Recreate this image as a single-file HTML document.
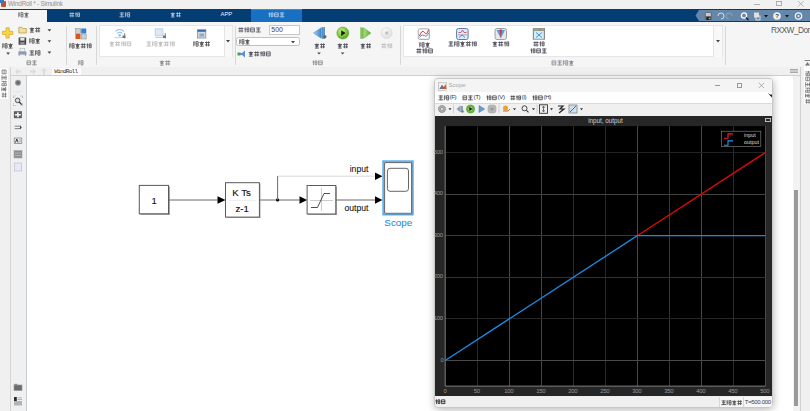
<!DOCTYPE html><html><head><meta charset="utf-8"><style>
*{margin:0;padding:0;box-sizing:border-box}
html,body{width:810px;height:411px;overflow:hidden;background:#fff;font-family:"Liberation Sans",sans-serif}
.ab{position:absolute}
.cg{position:absolute;display:block}
.t{position:absolute;white-space:nowrap;line-height:1}
</style></head><body><div class="ab" style="left:0;top:0;width:810px;height:9px;background:#f1f1f1"></div><div class="ab" style="left:1px;top:1px;width:5px;height:6px;background:#c0502a;border-radius:1px"></div><div class="ab" style="left:0px;top:0px;width:4px;height:3px;background:#3a78c0"></div><div class="t" style="left:8.1px;top:0.6px;font-size:6.3px;color:#909090;letter-spacing:-.2px">WindRoll * - Simulink</div><div class="ab" style="left:754px;top:3.5px;width:6px;height:1px;background:#b0b0b0"></div><div class="ab" style="left:776px;top:1px;width:6px;height:5px;border:1px solid #b0b0b0"></div><svg class="ab" style="left:797px;top:0px" width="8" height="8"><path d="M1 1L6.5 6.5M6.5 1L1 6.5" stroke="#a8a8a8" stroke-width=".8"/></svg><div class="ab" style="left:0;top:8.7px;width:810px;height:12.9px;background:#043d74"></div><div class="ab" style="left:0;top:10.4px;width:47.2px;height:12px;background:#f5f5f5"></div><div class="ab" style="left:250.8px;top:8.7px;width:51.2px;height:12.9px;background:#1870c2;border-top:.8px solid #3a8ad8"></div><svg class="ab" style="left:17.80px;top:12.39px;opacity:0.8" width="12.2" height="6.6"><path d="M0.79 0.40V5.22M0.79 1.12H2.33M0.79 3.05H2.33M3.05 0.64H4.98V4.98H3.05ZM3.05 2.81H4.98M8.41 0.40V1.36M6.24 1.46H10.58M6.96 2.42H9.85M6.96 3.39H9.85M8.41 1.46V5.22M6.48 4.98H10.33" stroke="#333" stroke-width="0.75" fill="none"/></svg><svg class="ab" style="left:68.50px;top:12.39px;opacity:0.8" width="12.2" height="6.6"><path d="M0.40 1.46H5.22M1.84 0.40V5.22M3.87 0.40V5.22M0.40 3.87H5.22M7.06 0.40V5.22M6.00 1.94H8.02M8.50 0.88H10.72M8.70 0.98V4.64H10.53V0.98M8.70 2.81H10.53" stroke="#fff" stroke-width="0.7" fill="none"/></svg><svg class="ab" style="left:118.80px;top:12.39px;opacity:0.8" width="12.2" height="6.6"><path d="M0.64 0.98H4.98M2.81 0.40V5.22M1.12 2.81H4.49M0.40 4.83H5.22M6.39 0.40V5.22M6.39 1.12H7.93M6.39 3.05H7.93M8.65 0.64H10.58V4.98H8.65ZM8.65 2.81H10.58" stroke="#fff" stroke-width="0.7" fill="none"/></svg><svg class="ab" style="left:169.80px;top:12.39px;opacity:0.8" width="12.2" height="6.6"><path d="M2.81 0.40V1.36M0.64 1.46H4.98M1.36 2.42H4.25M1.36 3.39H4.25M2.81 1.46V5.22M0.88 4.98H4.73M6.00 1.46H10.82M7.44 0.40V5.22M9.47 0.40V5.22M6.00 3.87H10.82" stroke="#fff" stroke-width="0.7" fill="none"/></svg><div class="t" style="left:220.5px;top:12.4px;font-size:5.9px;color:#e8eef5">APP</div><svg class="ab" style="left:268.20px;top:12.39px;opacity:0.8" width="17.8" height="6.6"><path d="M1.46 0.40V5.22M0.40 1.94H2.42M2.90 0.88H5.12M3.10 0.98V4.64H4.93V0.98M3.10 2.81H4.93M6.58 0.88H10.24V4.73H6.58ZM6.58 2.81H10.24M11.84 0.98H16.18M14.01 0.40V5.22M12.32 2.81H15.69M11.60 4.83H16.42" stroke="#fff" stroke-width="0.7" fill="none"/></svg><svg class="ab" style="left:695px;top:10px" width="115" height="11"><path d="M4 0 H115 V11 H4 L0.5 5.5 Z" fill="#6587aa"/></svg><svg class="ab" style="left:704px;top:11.5px" width="9" height="9"><rect x=".8" y=".5" width="7" height="7.5" fill="#6a6a6a"/><rect x="1.8" y="1" width="5" height="3" fill="#c8c8c8"/><rect x="2.5" y="5.2" width="3.8" height="2.8" fill="#1a1a1a"/><rect x="4.8" y="5.8" width="1" height="1.5" fill="#ddd"/></svg><svg class="ab" style="left:716px;top:11px" width="70" height="10"><path d="M2 5 a3 3 0 1 1 3 3" stroke="#cfe0f0" stroke-width="1" fill="none"/><path d="M16 5 a3 3 0 1 0 -3 3" stroke="#8aa4be" stroke-width="1" fill="none"/><circle cx="28" cy="4.5" r="2.6" stroke="#fff" stroke-width="1.3" fill="none"/><path d="M30 6.5 L32.5 9" stroke="#222" stroke-width="1.5"/><rect x="38" y="1.5" width="5" height="5" fill="#ddd"/><rect x="40" y="5" width="4" height="4" fill="none" stroke="#eee" stroke-width=".8"/><path d="M48 4 h4 l-2 2.5z" fill="#111"/></svg><svg class="ab" style="left:772px;top:11px" width="38" height="10"><circle cx="5" cy="5" r="3.8" fill="#f0f0f0"/><text x="3.2" y="7.3" font-size="6" font-family="Liberation Sans" font-weight="bold" fill="#333">?</text><path d="M13 4 h4 l-2 2.5z" fill="#111"/><circle cx="26.5" cy="5" r="3.2" fill="none" stroke="#f4f4f4" stroke-width="1.2"/><circle cx="26.5" cy="5" r="1" fill="#f4f4f4"/></svg><div class="ab" style="left:0;top:21.8px;width:810px;height:45.2px;background:#f5f5f5"></div><div class="ab" style="left:0;top:66.6px;width:810px;height:1px;background:#dcdcdc"></div><div class="ab" style="left:65.5px;top:26px;width:1px;height:39px;background:#d7d7d7"></div><div class="ab" style="left:96.3px;top:26px;width:1px;height:39px;background:#d7d7d7"></div><div class="ab" style="left:235.0px;top:26px;width:1px;height:39px;background:#d7d7d7"></div><div class="ab" style="left:400.4px;top:26px;width:1px;height:39px;background:#d7d7d7"></div><div class="ab" style="left:724.5px;top:26px;width:1px;height:39px;background:#d7d7d7"></div><div class="ab" style="left:98.6px;top:25px;width:134px;height:32px;background:#fff;border:1px solid #e6e6e6"></div><div class="ab" style="left:223.8px;top:25.6px;width:8.4px;height:31px;background:#f8f8f8;border-left:.6px solid #e4e4e4"></div><div class="ab" style="left:402.5px;top:25px;width:320px;height:32px;background:#fff;border:1px solid #e6e6e6"></div><div class="ab" style="left:713.3px;top:25.6px;width:8.4px;height:31px;background:#f8f8f8;border-left:.6px solid #e4e4e4"></div><svg class="ab" style="left:226.2px;top:40px" width="5" height="3"><path d="M0 0h4l-2 2.5z" fill="#444"/></svg><svg class="ab" style="left:716.0px;top:40px" width="5" height="3"><path d="M0 0h4l-2 2.5z" fill="#444"/></svg><svg class="ab" style="left:26.00px;top:59.69px;opacity:0.75" width="12.2" height="6.6"><path d="M0.98 0.88H4.64V4.73H0.98ZM0.98 2.81H4.64M6.24 0.98H10.58M8.41 0.40V5.22M6.72 2.81H10.09M6.00 4.83H10.82" stroke="#555" stroke-width="0.75" fill="none"/></svg><svg class="ab" style="left:77.80px;top:59.69px;opacity:0.75" width="6.6" height="6.6"><path d="M0.79 0.40V5.22M0.79 1.12H2.33M0.79 3.05H2.33M3.05 0.64H4.98V4.98H3.05ZM3.05 2.81H4.98" stroke="#555" stroke-width="0.75" fill="none"/></svg><svg class="ab" style="left:159.20px;top:59.81px;opacity:0.75" width="12.6" height="6.8"><path d="M2.89 0.40V1.40M0.65 1.50H5.14M1.40 2.49H4.39M1.40 3.49H4.39M2.89 1.50V5.39M0.90 5.14H4.89M6.20 1.50H11.19M7.70 0.40V5.39M9.79 0.40V5.39M6.20 3.99H11.19" stroke="#556" stroke-width="0.75" fill="none"/></svg><svg class="ab" style="left:312.00px;top:59.99px;opacity:0.75" width="12.2" height="6.6"><path d="M1.46 0.40V5.22M0.40 1.94H2.42M2.90 0.88H5.12M3.10 0.98V4.64H4.93V0.98M3.10 2.81H4.93M6.58 0.88H10.24V4.73H6.58ZM6.58 2.81H10.24" stroke="#556" stroke-width="0.75" fill="none"/></svg><svg class="ab" style="left:550.80px;top:59.61px;opacity:0.75" width="24.2" height="6.8"><path d="M1.00 0.90H4.79V4.89H1.00ZM1.00 2.89H4.79M6.45 1.00H10.94M8.69 0.40V5.39M6.95 2.89H10.44M6.20 4.99H11.19M12.40 0.40V5.39M12.40 1.15H14.00M12.40 3.14H14.00M14.74 0.65H16.74V5.14H14.74ZM14.74 2.89H16.74M20.29 0.40V1.40M18.05 1.50H22.54M18.80 2.49H21.79M18.80 3.49H21.79M20.29 1.50V5.39M18.30 5.14H22.29" stroke="#556" stroke-width="0.75" fill="none"/></svg><svg class="ab" style="left:0;top:22px" width="65" height="40"><path d="M6 5.8h3.2v3.5h3.6v3.2h-3.6v3.6h-3.2v-3.6h-3.6v-3.2h3.6z" fill="#f7d44a" stroke="#d9a520" stroke-width=".7"/><path d="M6.2 30.5h3.8l-1.9 2.2z" fill="#444"/><path d="M18.8 5.3h3l1 1.2h3.5v4.5h-7.5z" fill="#f3dfa0" stroke="#b89640" stroke-width=".7"/><rect x="18.6" y="15.5" width="7.6" height="7.3" rx=".6" fill="#4a4a4a"/><rect x="20.3" y="16" width="4.2" height="2.6" fill="#e8e8e8"/><rect x="20.3" y="20.2" width="4.2" height="2.3" fill="#9a9a9a"/><rect x="18.4" y="29.2" width="8" height="4.5" rx="1" fill="#8b9bb0"/><rect x="20" y="26.7" width="4.8" height="2.6" fill="#f4f4f4" stroke="#9aa" stroke-width=".5"/><rect x="19.8" y="32.5" width="5" height="2" fill="#eee"/><path d="M47.5 7.2h3.8l-1.9 2.2z" fill="#444"/><path d="M47.5 18.3h3.8l-1.9 2.2z" fill="#444"/><path d="M47.5 29.5h3.8l-1.9 2.2z" fill="#444"/></svg><svg class="ab" style="left:1.90px;top:43.15px;opacity:0.8" width="12.4" height="6.7"><path d="M0.79 0.40V5.30M0.79 1.14H2.36M0.79 3.10H2.36M3.10 0.65H5.06V5.06H3.10ZM3.10 2.85H5.06M8.55 0.40V1.38M6.35 1.48H10.76M7.08 2.46H10.02M7.08 3.44H10.02M8.55 1.48V5.30M6.59 5.06H10.51" stroke="#222" stroke-width="0.85" fill="none"/></svg><svg class="ab" style="left:29.00px;top:27.11px;opacity:0.8" width="12.6" height="6.8"><path d="M2.89 0.40V1.40M0.65 1.50H5.14M1.40 2.49H4.39M1.40 3.49H4.39M2.89 1.50V5.39M0.90 5.14H4.89M6.20 1.50H11.19M7.70 0.40V5.39M9.79 0.40V5.39M6.20 3.99H11.19" stroke="#222" stroke-width="0.85" fill="none"/></svg><svg class="ab" style="left:29.00px;top:38.41px;opacity:0.8" width="12.6" height="6.8"><path d="M0.80 0.40V5.39M0.80 1.15H2.40M0.80 3.14H2.40M3.14 0.65H5.14V5.14H3.14ZM3.14 2.89H5.14M8.69 0.40V1.40M6.45 1.50H10.94M7.20 2.49H10.19M7.20 3.49H10.19M8.69 1.50V5.39M6.70 5.14H10.69" stroke="#222" stroke-width="0.85" fill="none"/></svg><svg class="ab" style="left:29.00px;top:49.61px;opacity:0.8" width="12.6" height="6.8"><path d="M0.65 1.00H5.14M2.89 0.40V5.39M1.15 2.89H4.64M0.40 4.99H5.39M6.60 0.40V5.39M6.60 1.15H8.20M6.60 3.14H8.20M8.94 0.65H10.94V5.14H8.94ZM8.94 2.89H10.94" stroke="#222" stroke-width="0.85" fill="none"/></svg><svg class="ab" style="left:75px;top:27.5px" width="12" height="12"><rect x=".5" y=".5" width="5" height="5" fill="#c8d0d0" stroke="#8a9a9a" stroke-width=".6"/><rect x="6.2" y=".5" width="5" height="5" fill="#2a86d4"/><rect x=".5" y="6" width="5" height="5" fill="#d9531e"/><rect x="6.2" y="6" width="5" height="5" fill="#c8d0d0" stroke="#8a9a9a" stroke-width=".6"/></svg><svg class="ab" style="left:69.10px;top:43.15px;opacity:0.8" width="23.8" height="6.7"><path d="M0.79 0.40V5.30M0.79 1.14H2.36M0.79 3.10H2.36M3.10 0.65H5.06V5.06H3.10ZM3.10 2.85H5.06M8.55 0.40V1.38M6.35 1.48H10.76M7.08 2.46H10.02M7.08 3.44H10.02M8.55 1.48V5.30M6.59 5.06H10.51M11.80 1.48H16.70M13.27 0.40V5.30M15.33 0.40V5.30M11.80 3.93H16.70M18.58 0.40V5.30M17.50 1.97H19.56M20.05 0.89H22.30M20.25 0.99V4.71H22.11V0.99M20.25 2.85H22.11" stroke="#222" stroke-width="0.85" fill="none"/></svg><svg class="ab" style="left:100px;top:22px" width="125" height="20"><path d="M15.5 9.5 a5.5 5.5 0 0 1 8.5 0" stroke="#8cc0ea" stroke-width="1.1" fill="none"/><path d="M17.2 11.5 a3.2 3.2 0 0 1 5 0" stroke="#8cc0ea" stroke-width="1.1" fill="none"/><circle cx="19.7" cy="13.2" r="1.3" fill="#8cc0ea"/><rect x="14.5" y="15.2" width="10" height=".9" fill="#c8c8c8"/><rect x="24" y="11" width="1.2" height="5.5" fill="#999"/><rect x="22.5" y="13.5" width="3" height="2.5" fill="#777"/><rect x="55.2" y="6.8" width="7.7" height="7" fill="#dce8f4" stroke="#b8cadb" stroke-width=".8"/><rect x="55.2" y="15" width="10" height=".9" fill="#c8c8c8"/><rect x="64.7" y="11" width="1.2" height="5.5" fill="#999"/><rect x="63" y="13.5" width="3" height="2.5" fill="#777"/><rect x="97.5" y="7.8" width="8.3" height="8.2" fill="#d9d9d9" stroke="#8a8a8a" stroke-width=".8"/><rect x="97.5" y="7.8" width="8.3" height="2" fill="#3a6ab0"/><rect x="99.3" y="11.5" width="4.8" height="3" fill="#7ab0e0"/></svg><svg class="ab" style="left:109.20px;top:41.15px;opacity:0.65" width="23.8" height="6.7"><path d="M2.85 0.40V1.38M0.65 1.48H5.06M1.38 2.46H4.32M1.38 3.44H4.32M2.85 1.48V5.30M0.89 5.06H4.81M6.10 1.48H11.00M7.57 0.40V5.30M9.63 0.40V5.30M6.10 3.93H11.00M12.88 0.40V5.30M11.80 1.97H13.86M14.35 0.89H16.60M14.55 0.99V4.71H16.41V0.99M14.55 2.85H16.41M18.09 0.89H21.81V4.81H18.09ZM18.09 2.85H21.81" stroke="#999" stroke-width="0.85" fill="none"/></svg><svg class="ab" style="left:146.20px;top:41.11px;opacity:0.65" width="30.0" height="6.8"><path d="M0.65 1.00H5.14M2.89 0.40V5.39M1.15 2.89H4.64M0.40 4.99H5.39M6.60 0.40V5.39M6.60 1.15H8.20M6.60 3.14H8.20M8.94 0.65H10.94V5.14H8.94ZM8.94 2.89H10.94M14.49 0.40V1.40M12.25 1.50H16.74M13.00 2.49H15.99M13.00 3.49H15.99M14.49 1.50V5.39M12.50 5.14H16.49M17.80 1.50H22.79M19.30 0.40V5.39M21.39 0.40V5.39M17.80 3.99H22.79M24.70 0.40V5.39M23.60 2.00H25.69M26.19 0.90H28.49M26.39 1.00V4.79H28.29V1.00M26.39 2.89H28.29" stroke="#999" stroke-width="0.85" fill="none"/></svg><svg class="ab" style="left:192.50px;top:41.31px;opacity:0.8" width="18.4" height="6.8"><path d="M0.80 0.40V5.39M0.80 1.15H2.40M0.80 3.14H2.40M3.14 0.65H5.14V5.14H3.14ZM3.14 2.89H5.14M8.69 0.40V1.40M6.45 1.50H10.94M7.20 2.49H10.19M7.20 3.49H10.19M8.69 1.50V5.39M6.70 5.14H10.69M12.00 1.50H16.99M13.50 0.40V5.39M15.59 0.40V5.39M12.00 3.99H16.99" stroke="#222" stroke-width="0.85" fill="none"/></svg><svg class="ab" style="left:237.90px;top:26.81px;opacity:0.8" width="24.2" height="6.8"><path d="M0.40 1.50H5.39M1.90 0.40V5.39M3.99 0.40V5.39M0.40 3.99H5.39M7.30 0.40V5.39M6.20 2.00H8.29M8.79 0.90H11.09M8.99 1.00V4.79H10.89V1.00M8.99 2.89H10.89M12.60 0.90H16.39V4.89H12.60ZM12.60 2.89H16.39M18.05 1.00H22.54M20.29 0.40V5.39M18.55 2.89H22.04M17.80 4.99H22.79" stroke="#334" stroke-width="0.85" fill="none"/></svg><div class="ab" style="left:269px;top:24.9px;width:30.6px;height:10.4px;background:#fff;border:1px solid #c8c8c8"></div><div class="t" style="left:271.3px;top:26.2px;font-size:7px;color:#444">500</div><div class="ab" style="left:236.3px;top:36.6px;width:63.4px;height:9.8px;background:#fff;border:1px solid #c0c0c0;border-radius:2.5px"></div><svg class="ab" style="left:238.80px;top:38.69px;opacity:0.8" width="12.2" height="6.6"><path d="M0.79 0.40V5.22M0.79 1.12H2.33M0.79 3.05H2.33M3.05 0.64H4.98V4.98H3.05ZM3.05 2.81H4.98M8.41 0.40V1.36M6.24 1.46H10.58M6.96 2.42H9.85M6.96 3.39H9.85M8.41 1.46V5.22M6.48 4.98H10.33" stroke="#222" stroke-width="0.85" fill="none"/></svg><svg class="ab" style="left:291px;top:41px" width="5" height="3"><path d="M0 0h4l-2 2.5z" fill="#444"/></svg><svg class="ab" style="left:236px;top:49.5px" width="11" height="8"><rect x="1.5" y="2.5" width="3" height="3" fill="#3aa84a"/><path d="M4 3 h2 l3 -2.5 v7 l-3 -2.5 h-2z" fill="#5b8fd0"/></svg><svg class="ab" style="left:248.00px;top:50.61px;opacity:0.8" width="24.2" height="6.8"><path d="M2.89 0.40V1.40M0.65 1.50H5.14M1.40 2.49H4.39M1.40 3.49H4.39M2.89 1.50V5.39M0.90 5.14H4.89M6.20 1.50H11.19M7.70 0.40V5.39M9.79 0.40V5.39M6.20 3.99H11.19M13.10 0.40V5.39M12.00 2.00H14.09M14.59 0.90H16.89M14.79 1.00V4.79H16.69V1.00M14.79 2.89H16.69M18.40 0.90H22.19V4.89H18.40ZM18.40 2.89H22.19" stroke="#223" stroke-width="0.85" fill="none"/></svg><svg class="ab" style="left:305px;top:22px" width="95" height="36"><defs><radialGradient id="gr" cx=".4" cy=".35" r=".7"><stop offset="0" stop-color="#c6f08a"/><stop offset=".6" stop-color="#7cc83a"/><stop offset="1" stop-color="#4a9a1c"/></radialGradient><radialGradient id="gs" cx=".4" cy=".35" r=".7"><stop offset="0" stop-color="#fafafa"/><stop offset="1" stop-color="#dcdcdc"/></radialGradient><linearGradient id="gb" x1="0" x2="1"><stop offset="0" stop-color="#a8d0f0"/><stop offset="1" stop-color="#3a86c8"/></linearGradient><linearGradient id="gg" x1="0" x2="1"><stop offset="0" stop-color="#a8e080"/><stop offset="1" stop-color="#5aaa30"/></linearGradient></defs><path d="M8.5 11 L16.3 5.7 V16.3 Z" fill="url(#gb)" stroke="#3a80c0" stroke-width=".5"/><rect x="17" y="5.7" width="2.8" height="10.8" fill="#5a9ad0" stroke="#3a70a0" stroke-width=".4"/><circle cx="19.8" cy="14.8" r="1.7" fill="#666"/><circle cx="37.8" cy="11.1" r="6" fill="url(#gr)" stroke="#5a9a2a" stroke-width=".5"/><path d="M36.2 8.3v5.6l4.4-2.8z" fill="#1a1a1a"/><rect x="55.5" y="5.8" width="2.2" height="10.6" fill="url(#gg)" stroke="#5aa030" stroke-width=".4"/><path d="M58.5 5.8 V16.4 L65.8 11.1 Z" fill="url(#gg)" stroke="#5aa030" stroke-width=".5"/><circle cx="81.7" cy="11" r="5.6" fill="url(#gs)" stroke="#d8d8d8" stroke-width=".5"/><rect x="80.2" y="9.5" width="3" height="3" fill="#c0c0c0"/><path d="M12.2 30.6h3.6l-1.8 2z" fill="#444"/><path d="M35.8 30.6h3.6l-1.8 2z" fill="#444"/></svg><svg class="ab" style="left:313.50px;top:42.95px;opacity:0.85" width="12.4" height="6.7"><path d="M2.85 0.40V1.38M0.65 1.48H5.06M1.38 2.46H4.32M1.38 3.44H4.32M2.85 1.48V5.30M0.89 5.06H4.81M6.10 1.48H11.00M7.57 0.40V5.30M9.63 0.40V5.30M6.10 3.93H11.00" stroke="#334" stroke-width="0.9" fill="none"/></svg><svg class="ab" style="left:336.60px;top:42.95px;opacity:0.85" width="12.4" height="6.7"><path d="M2.85 0.40V1.38M0.65 1.48H5.06M1.38 2.46H4.32M1.38 3.44H4.32M2.85 1.48V5.30M0.89 5.06H4.81M6.10 1.48H11.00M7.57 0.40V5.30M9.63 0.40V5.30M6.10 3.93H11.00" stroke="#334" stroke-width="0.9" fill="none"/></svg><svg class="ab" style="left:359.80px;top:42.95px;opacity:0.85" width="12.4" height="6.7"><path d="M2.85 0.40V1.38M0.65 1.48H5.06M1.38 2.46H4.32M1.38 3.44H4.32M2.85 1.48V5.30M0.89 5.06H4.81M6.10 1.48H11.00M7.57 0.40V5.30M9.63 0.40V5.30M6.10 3.93H11.00" stroke="#334" stroke-width="0.9" fill="none"/></svg><svg class="ab" style="left:381.20px;top:42.95px;opacity:0.6" width="12.4" height="6.7"><path d="M0.40 1.48H5.30M1.87 0.40V5.30M3.93 0.40V5.30M0.40 3.93H5.30M7.18 0.40V5.30M6.10 1.97H8.16M8.65 0.89H10.90M8.85 0.99V4.71H10.71V0.99M8.85 2.85H10.71" stroke="#999" stroke-width="0.85" fill="none"/></svg><svg class="ab" style="left:410px;top:22px" width="140" height="20"><rect x="8.6" y="7.2" width="11" height="10.5" rx="1.5" fill="#7a7a7a" opacity=".5"/><rect x="8.3" y="6.8" width="11" height="10.5" rx="1.5" fill="#fafafa" stroke="#9a9a9a" stroke-width=".8"/><path d="M9.5 14 q2.5 -7 5 -3.5 t4 -3" stroke="#d03030" fill="none" stroke-width="1"/><path d="M9.5 15.5 q2.5 -4 5 -2 t4 -2.5" stroke="#3a70c0" fill="none" stroke-width=".8"/><rect x="46.6" y="6.5" width="11.5" height="11" rx="1.8" fill="#dfe8f4" stroke="#5a7ab0" stroke-width="1"/><path d="M48.5 10.5h2.5l1.5 -2.5 1.5 2.5h2.5" stroke="#d04040" fill="none" stroke-width=".8"/><path d="M48 12.8h9" stroke="#5a7ab0" stroke-width=".5"/><path d="M49 15.5l3 -2.5 3 2.5" stroke="#3a70c0" fill="none" stroke-width=".8"/><rect x="85" y="6.5" width="11.5" height="11" rx="2" fill="#e8e8e8" stroke="#8a8a8a" stroke-width=".8"/><path d="M86.5 8 l4.3 8.5 4.3 -8.5z" fill="#5a9ae0"/><path d="M89.6 7.5 l1.2 8 1.2 -8z" fill="#e03030"/><rect x="122.8" y="6.1" width="12.2" height="11.6" fill="#8a8a8a"/><rect x="123.8" y="7" width="10.2" height="1.5" fill="#7ac080"/><rect x="129" y="7" width="2" height="1.5" fill="#e06060"/><rect x="124" y="9" width="9.8" height="7.8" fill="#d8ecf8"/><path d="M126 10.5l6 5M132 10.5l-6 5" stroke="#3a9ae0" stroke-width="1"/></svg><svg class="ab" style="left:418.60px;top:41.55px;opacity:0.85" width="12.4" height="6.7"><path d="M0.79 0.40V5.30M0.79 1.14H2.36M0.79 3.10H2.36M3.10 0.65H5.06V5.06H3.10ZM3.10 2.85H5.06M8.55 0.40V1.38M6.35 1.48H10.76M7.08 2.46H10.02M7.08 3.44H10.02M8.55 1.48V5.30M6.59 5.06H10.51" stroke="#334" stroke-width="0.9" fill="none"/></svg><svg class="ab" style="left:415.60px;top:48.31px;opacity:0.85" width="18.4" height="6.8"><path d="M0.40 1.50H5.39M1.90 0.40V5.39M3.99 0.40V5.39M0.40 3.99H5.39M7.30 0.40V5.39M6.20 2.00H8.29M8.79 0.90H11.09M8.99 1.00V4.79H10.89V1.00M8.99 2.89H10.89M12.60 0.90H16.39V4.89H12.60ZM12.60 2.89H16.39" stroke="#334" stroke-width="0.9" fill="none"/></svg><svg class="ab" style="left:447.80px;top:41.11px;opacity:0.85" width="30.0" height="6.8"><path d="M0.65 1.00H5.14M2.89 0.40V5.39M1.15 2.89H4.64M0.40 4.99H5.39M6.60 0.40V5.39M6.60 1.15H8.20M6.60 3.14H8.20M8.94 0.65H10.94V5.14H8.94ZM8.94 2.89H10.94M14.49 0.40V1.40M12.25 1.50H16.74M13.00 2.49H15.99M13.00 3.49H15.99M14.49 1.50V5.39M12.50 5.14H16.49M17.80 1.50H22.79M19.30 0.40V5.39M21.39 0.40V5.39M17.80 3.99H22.79M24.70 0.40V5.39M23.60 2.00H25.69M26.19 0.90H28.49M26.39 1.00V4.79H28.29V1.00M26.39 2.89H28.29" stroke="#334" stroke-width="0.9" fill="none"/></svg><svg class="ab" style="left:492.00px;top:41.11px;opacity:0.85" width="18.4" height="6.8"><path d="M2.89 0.40V1.40M0.65 1.50H5.14M1.40 2.49H4.39M1.40 3.49H4.39M2.89 1.50V5.39M0.90 5.14H4.89M6.20 1.50H11.19M7.70 0.40V5.39M9.79 0.40V5.39M6.20 3.99H11.19M13.10 0.40V5.39M12.00 2.00H14.09M14.59 0.90H16.89M14.79 1.00V4.79H16.69V1.00M14.79 2.89H16.69" stroke="#334" stroke-width="0.9" fill="none"/></svg><svg class="ab" style="left:532.80px;top:40.76px;opacity:0.85" width="12.8" height="6.9"><path d="M0.40 1.52H5.47M1.92 0.40V5.47M4.05 0.40V5.47M0.40 4.05H5.47M7.42 0.40V5.47M6.30 2.02H8.43M8.94 0.91H11.27M9.14 1.01V4.87H11.07V1.01M9.14 2.94H11.07" stroke="#334" stroke-width="0.9" fill="none"/></svg><svg class="ab" style="left:530.40px;top:48.35px;opacity:0.85" width="18.1" height="6.7"><path d="M1.48 0.40V5.30M0.40 1.97H2.46M2.95 0.89H5.20M3.15 0.99V4.71H5.01V0.99M3.15 2.85H5.01M6.69 0.89H10.41V4.81H6.69ZM6.69 2.85H10.41M12.05 0.99H16.46M14.25 0.40V5.30M12.54 2.85H15.97M11.80 4.91H16.70" stroke="#334" stroke-width="0.9" fill="none"/></svg><div class="t" style="left:771px;top:26px;font-size:8.3px;color:#5a5a5a;letter-spacing:-0.5px">RXXW_Dor</div><svg class="ab" style="left:803.5px;top:60px" width="7" height="6"><path d="M0.5 0.5h6" stroke="#666" stroke-width=".8"/><path d="M1 5.5 l2.5 -3.5 2.5 3.5z" fill="#777"/></svg><div class="ab" style="left:0;top:67px;width:810px;height:8.6px;background:#f0f0f0"></div><svg class="ab" style="left:12px;top:67px" width="40" height="9"><path d="M3 4.5 l3 -3 v2 h3 v2 h-3 v2z" fill="#dcdcdc"/><path d="M24 4.5 l-3 -3 v2 h-3 v2 h3 v2z" fill="#dcdcdc"/><path d="M32 1 l3 3 h-2 v4 h-2 v-4 h-2z" fill="#dcdcdc"/></svg><div class="ab" style="left:51.8px;top:67.5px;width:29.2px;height:8.5px;background:#fff"></div><div class="t" style="left:54.3px;top:68.9px;font-size:6.1px;color:#333;font-family:'Liberation Mono',monospace;letter-spacing:-0.78px">WindRoll</div><div class="ab" style="left:0;top:67px;width:9.5px;height:344px;background:#f0f0f0"></div><div class="ab" style="left:0;top:67.5px;width:7.5px;height:31px;background:#fff"></div><div class="ab" style="left:-11.5px;top:80px;width:31px;height:7px;transform:rotate(90deg)"><svg class="ab" style="left:0.5px;top:0.61px;opacity:0.7" width="30.0" height="6.8"><path d="M1.00 0.90H4.79V4.89H1.00ZM1.00 2.89H4.79M6.45 1.00H10.94M8.69 0.40V5.39M6.95 2.89H10.44M6.20 4.99H11.19M12.40 0.40V5.39M12.40 1.15H14.00M12.40 3.14H14.00M14.74 0.65H16.74V5.14H14.74ZM14.74 2.89H16.74M20.29 0.40V1.40M18.05 1.50H22.54M18.80 2.49H21.79M18.80 3.49H21.79M20.29 1.50V5.39M18.30 5.14H22.29M23.60 1.50H28.59M25.10 0.40V5.39M27.19 0.40V5.39M23.60 3.99H28.59" stroke="#333" stroke-width="0.8" fill="none"/></svg></div><div class="ab" style="left:9.5px;top:67px;width:1px;height:344px;background:#d4d4d4"></div><div class="ab" style="left:10.5px;top:75.6px;width:16px;height:336px;background:#f0f0f0"></div><div class="ab" style="left:26.3px;top:75.6px;width:1px;height:336px;background:#c9cdd6"></div><div class="ab" style="left:10px;top:75.4px;width:790px;height:1px;background:#cfcfcf"></div><svg class="ab" style="left:11px;top:77px" width="15" height="334"><circle cx="7" cy="5.8" r="3" fill="#9a9a9a"/><circle cx="7" cy="5.8" r="1.9" fill="#6a6a6a"/><path d="M2.5 14.7h9" stroke="#e2e2e2" stroke-width=".8"/><path d="M2.5 21v-2h2M9.5 19h2v2M11.5 26.5v2h-2M4.5 28.5h-2v-2" stroke="#888" stroke-width=".6" fill="none" stroke-dasharray="1 .6"/><circle cx="6.6" cy="23.4" r="2.3" fill="#ddd" stroke="#555" stroke-width="1"/><path d="M8.2 25l2.6 2.6" stroke="#333" stroke-width="1.3"/><rect x="2.9" y="34.2" width="8" height="7" fill="#5e5e5e"/><path d="M6.9 35.2v5M3.9 37.7h6" stroke="#f4f4f4" stroke-width="1.6"/><path d="M3.7 49.2h5.5M3.7 51.6h5.5" stroke="#777" stroke-width=".9"/><path d="M9 48.2 l1.8 2.2 -1.8 2.2z" fill="#444"/><rect x="3.2" y="61" width="7.6" height="5.5" fill="#f0f0f0" stroke="#8a8a8a" stroke-width=".8"/><path d="M4.5 65.5l1.3 -3.5 1.3 3.5" stroke="#222" stroke-width=".9" fill="none"/><path d="M8 63h2M8 64.8h2" stroke="#777" stroke-width=".6"/><rect x="3" y="73.5" width="8" height="7.5" fill="#8e8e8e" stroke="#a8a8a8" stroke-width=".6"/><path d="M4 76h6M4 78.5h6" stroke="#c4c4c4" stroke-width=".7"/><rect x="3.5" y="86" width="7" height="8" fill="#e8e8fa" stroke="#c4c4d8" stroke-width=".8"/><rect x="3" y="308" width="8" height="5.5" fill="#6a6a6a" stroke="#9a9a9a" stroke-width=".7"/><rect x="3.3" y="306.8" width="3" height="1.6" fill="#888"/><rect x="3" y="320" width="2.8" height="4.2" fill="#2a2a2a"/><rect x="3" y="324" width="8" height="4.5" fill="#b4b4b4"/><path d="M6.5 320.8h4.5M6.5 322.5h4.5" stroke="#999" stroke-width=".7"/></svg><div class="ab" style="left:792.5px;top:76px;width:8px;height:335px;background:#f2f2f2"></div><div class="ab" style="left:794.3px;top:190px;width:4px;height:216px;background:#9a9a9a"></div><div class="ab" style="left:800.2px;top:67px;width:1px;height:344px;background:#cfcfcf"></div><div class="ab" style="left:801.2px;top:67px;width:8.8px;height:344px;background:#f0f0f0"></div><div class="ab" style="left:803.7px;top:67px;width:6.3px;height:37.3px;background:#fff"></div><div class="ab" style="left:790.5px;top:82.5px;width:34px;height:7px;transform:rotate(90deg)"><svg class="ab" style="left:0.50px;top:0.69px;opacity:0.7" width="34.6" height="6.6"><path d="M1.46 0.40V5.22M0.40 1.94H2.42M2.90 0.88H5.12M3.10 0.98V4.64H4.93V0.98M3.10 2.81H4.93M6.58 0.88H10.24V4.73H6.58ZM6.58 2.81H10.24M11.84 0.98H16.18M14.01 0.40V5.22M12.32 2.81H15.69M11.60 4.83H16.42M17.59 0.40V5.22M17.59 1.12H19.13M17.59 3.05H19.13M19.85 0.64H21.78V4.98H19.85ZM19.85 2.81H21.78M25.21 0.40V1.36M23.04 1.46H27.38M23.76 2.42H26.65M23.76 3.39H26.65M25.21 1.46V5.22M23.28 4.98H27.13M28.40 1.46H33.22M29.84 0.40V5.22M31.87 0.40V5.22M28.40 3.87H33.22" stroke="#333" stroke-width="0.8" fill="none"/></svg></div><svg class="ab" style="left:789px;top:68px" width="10" height="6"><path d="M1 1.5h8M1 3h8M1 4.5h8" stroke="#888" stroke-width=".7"/></svg><svg class="ab" style="left:0;top:0" width="810" height="411">
<defs><filter id="sh" x="-20%" y="-20%" width="150%" height="150%"><feGaussianBlur stdDeviation="0.6"/></filter></defs>
<g fill="#000" opacity=".35" filter="url(#sh)">
<rect x="140.5" y="186.5" width="29.5" height="28.5"/>
<rect x="226.5" y="183.5" width="34" height="34.5"/>
<rect x="308" y="186.5" width="29" height="28.5"/>
</g>
<rect x="139.3" y="185.4" width="29.2" height="28.4" fill="#fff" stroke="#5a5a5a" stroke-width="1"/>
<rect x="225.5" y="182.7" width="33.9" height="34.4" fill="#fff" stroke="#5a5a5a" stroke-width="1"/>
<path d="M229 200.5h27" stroke="#ddd" stroke-width=".5"/>
<rect x="307.1" y="185.5" width="28.7" height="28.5" fill="#fff" stroke="#5a5a5a" stroke-width="1"/>
<path d="M310 200.5h23M321.5 188v23" stroke="#999" stroke-width=".5"/>
<path d="M311 207.5h6.5l6.5 -14h6" stroke="#222" stroke-width=".8" fill="none"/>
<path d="M168.5 200h49" stroke="#6a6a6a" stroke-width="1"/>
<path d="M217.5 196.3l8 3.7l-8 3.7z" fill="#000"/>
<path d="M259.4 200h40" stroke="#6a6a6a" stroke-width="1"/>
<path d="M299.5 196.3l7.6 3.7l-7.6 3.7z" fill="#000"/>
<circle cx="277.6" cy="199.9" r="1.6" fill="#000"/>
<path d="M277.6 200v-24" stroke="#6a6a6a" stroke-width="1"/>
<path d="M277.6 176.2h97" stroke="#c8c8c8" stroke-width=".7"/>
<path d="M375 172.5l7.5 3.7l-7.5 3.7z" fill="#000"/>
<path d="M335.8 200h39.5" stroke="#6a6a6a" stroke-width="1"/>
<path d="M375 196.3l7.5 3.7l-7.5 3.7z" fill="#000"/>
<rect x="383.1" y="161.1" width="29.8" height="53.6" fill="#fff" stroke="#46a8f0" stroke-width="1.5"/>
<path d="M384.6 162.6V213.3H411.6V162.6Z" fill="none" stroke="#3a3a3a" stroke-width=".8"/>
<path d="M412.6 163.5V214.2H386" fill="none" stroke="#888" stroke-width=".5"/>
<rect x="387.4" y="168.3" width="21.1" height="23" rx="2.6" fill="#fff" stroke="#555" stroke-width=".9"/>
</svg><div class="t" style="left:151.5px;top:195.5px;font-size:9.5px;color:#111;-webkit-text-stroke:.12px #111">1</div><div class="t" style="left:232.3px;top:187.8px;font-size:9.6px;color:#111;-webkit-text-stroke:.12px #111">K Ts</div><div class="t" style="left:235.5px;top:204.3px;font-size:9.6px;color:#111;-webkit-text-stroke:.12px #111">z-1</div><div class="t" style="left:349.7px;top:165px;font-size:8.6px;color:#111;-webkit-text-stroke:.08px #111">input</div><div class="t" style="left:344.5px;top:203.8px;font-size:8.6px;color:#111;-webkit-text-stroke:.08px #111">output</div><div class="t" style="left:384.3px;top:217.5px;font-size:9.9px;color:#1e8ae6;-webkit-text-stroke:.05px #1e8ae6">Scope</div><div class="ab" style="left:434.5px;top:78.5px;width:338.5px;height:329.5px;border-radius:4px;box-shadow:0 1px 9px rgba(0,0,0,.32)"></div><div class="ab" style="left:434.2px;top:78.3px;width:339.2px;height:330.0px;background:#f0f0f0;border:.6px solid #c8c8c8;border-radius:4px;overflow:hidden"><div class="ab" style="left:0;top:0;width:340px;height:12.9px;background:#f4f4f4"></div><svg class="ab" style="left:3px;top:2.5px" width="9" height="9"><rect x=".5" y=".5" width="8" height="8" fill="#eee" stroke="#aaa" stroke-width=".5"/><path d="M1.5 7 l2.5 -4 2 2 1.5 -3 1 5z" fill="#d05a20"/><path d="M1.5 7l2.5-4 1.5 3z" fill="#3a7ad0"/></svg><div class="t" style="left:13.2px;top:3.2px;font-size:6.1px;color:#a8a8a8">Scope</div><div class="ab" style="left:280px;top:5.8px;width:5px;height:.8px;background:#999"></div><div class="ab" style="left:301.6px;top:3.3px;width:5px;height:5px;border:.8px solid #999"></div><svg class="ab" style="left:323px;top:2.8px" width="7" height="7"><path d="M.8 .8L6 6M6 .8L.8 6" stroke="#9a9a9a" stroke-width=".75"/></svg><div class="ab" style="left:0;top:12.9px;width:340px;height:10.7px;background:#fff"></div><svg class="ab" style="left:3.00px;top:15.49px;opacity:0.8" width="12.2" height="6.6"><path d="M0.64 0.98H4.98M2.81 0.40V5.22M1.12 2.81H4.49M0.40 4.83H5.22M6.39 0.40V5.22M6.39 1.12H7.93M6.39 3.05H7.93M8.65 0.64H10.58V4.98H8.65ZM8.65 2.81H10.58" stroke="#222" stroke-width="0.85" fill="none"/></svg><svg class="ab" style="left:27.00px;top:15.49px;opacity:0.8" width="12.2" height="6.6"><path d="M0.98 0.88H4.64V4.73H0.98ZM0.98 2.81H4.64M6.24 0.98H10.58M8.41 0.40V5.22M6.72 2.81H10.09M6.00 4.83H10.82" stroke="#222" stroke-width="0.85" fill="none"/></svg><svg class="ab" style="left:51.00px;top:15.49px;opacity:0.8" width="12.2" height="6.6"><path d="M1.46 0.40V5.22M0.40 1.94H2.42M2.90 0.88H5.12M3.10 0.98V4.64H4.93V0.98M3.10 2.81H4.93M6.58 0.88H10.24V4.73H6.58ZM6.58 2.81H10.24" stroke="#222" stroke-width="0.85" fill="none"/></svg><svg class="ab" style="left:75.00px;top:15.49px;opacity:0.8" width="12.2" height="6.6"><path d="M0.40 1.46H5.22M1.84 0.40V5.22M3.87 0.40V5.22M0.40 3.87H5.22M7.06 0.40V5.22M6.00 1.94H8.02M8.50 0.88H10.72M8.70 0.98V4.64H10.53V0.98M8.70 2.81H10.53" stroke="#222" stroke-width="0.85" fill="none"/></svg><svg class="ab" style="left:97.00px;top:15.49px;opacity:0.8" width="12.2" height="6.6"><path d="M1.46 0.40V5.22M0.40 1.94H2.42M2.90 0.88H5.12M3.10 0.98V4.64H4.93V0.98M3.10 2.81H4.93M6.58 0.88H10.24V4.73H6.58ZM6.58 2.81H10.24" stroke="#222" stroke-width="0.85" fill="none"/></svg><div class="t" style="left:14.2px;top:14.9px;font-size:6.2px;color:#333;letter-spacing:-.3px">(F)</div><div class="t" style="left:38.2px;top:14.9px;font-size:6.2px;color:#333;letter-spacing:-.3px">(T)</div><div class="t" style="left:62.2px;top:14.9px;font-size:6.2px;color:#333;letter-spacing:-.3px">(V)</div><div class="t" style="left:86.2px;top:14.9px;font-size:6.2px;color:#333;letter-spacing:-.3px">(I)</div><div class="t" style="left:108.2px;top:14.9px;font-size:6.2px;color:#333;letter-spacing:-.3px">(H)</div><svg class="ab" style="left:333px;top:14px" width="6" height="6"><path d="M1 1.5h3v3z" fill="#222"/><path d="M.5 .5l4 4" stroke="#222" stroke-width=".6"/></svg><div class="ab" style="left:0;top:23.6px;width:340px;height:12.8px;background:#f0f0f0;border-top:.6px solid #dadada"></div><svg class="ab" style="left:-0.6px;top:23.4px" width="340" height="12">
<circle cx="7" cy="6" r="3.6" fill="#a8a8a8" stroke="#7a7a7a" stroke-width=".9" stroke-dasharray="1.2 .8"/><circle cx="7" cy="6" r="1.5" fill="#e8e8e8" stroke="#777" stroke-width=".5"/>
<path d="M13.5 5.2h3l-1.5 2z" fill="#333"/>
<path d="M18.5 1.5v9" stroke="#bbb" stroke-width=".6"/>
<path d="M21.5 6l4 -3.5v7z" fill="#8aa0b8"/><rect x="25.5" y="3" width="2.5" height="6" fill="#8aa0b8"/><circle cx="27.5" cy="8.5" r="1.2" fill="#777"/>
<circle cx="35.5" cy="6" r="4" fill="#7acc48" stroke="#4a9a20" stroke-width=".8"/><circle cx="35.5" cy="6" r="2.6" fill="#a8dc80" stroke="#3a7a18" stroke-width=".5"/><path d="M34.3 3.9v4.2l3.3-2.1z" fill="#1a1a1a"/>
<path d="M44 2.5v7l5.8 -3.5z" fill="#6a9ad0" stroke="#4a7ab0" stroke-width=".5"/>
<rect x="53" y="2" width="8" height="8" rx="2.5" fill="#b8b8b8" stroke="#a0a0a0" stroke-width=".5"/><rect x="55.5" y="4.5" width="3" height="3" fill="#9a9a9a"/>
<path d="M64 1.5v9" stroke="#bbb" stroke-width=".6"/>
<circle cx="70.5" cy="5" r="2.5" fill="#f0a020"/><path d="M68 8h5l2 -2" stroke="#b07030" stroke-width="1" fill="none"/>
<path d="M78 5.2h3l-1.5 2z" fill="#333"/>
<circle cx="89.5" cy="5.3" r="2.5" fill="none" stroke="#333" stroke-width=".9"/><path d="M91.5 7.3l2 2" stroke="#333" stroke-width="1.1"/>
<path d="M97 5.2h3l-1.5 2z" fill="#333"/>
<path d="M102 1.5v9" stroke="#bbb" stroke-width=".6"/>
<rect x="104.5" y="1.8" width="8" height="8.5" fill="none" stroke="#333" stroke-width=".9"/><path d="M108.5 3.5v5M107 4.5l1.5 -1 1.5 1M107 7.5l1.5 1 1.5 -1" stroke="#333" stroke-width=".7" fill="none"/>
<path d="M115 5.2h3l-1.5 2z" fill="#333"/>
<path d="M123 3h5l-3 3h4l-5 4" stroke="#222" stroke-width="1.2" fill="none"/>
<rect x="134" y="2" width="8" height="8" fill="#cfe0f4" stroke="#777" stroke-width=".7"/><path d="M135 9l6 -6" stroke="#555" stroke-width=".9"/>
<path d="M145 5.2h3l-1.5 2z" fill="#333"/>
</svg><div class="ab" style="left:-1px;top:36.4px;width:338.6px;height:280.7px;background:#262626"></div><div class="t" style="left:153px;top:38.6px;font-size:6.3px;color:#cfcfcf">input, output</div><div class="ab" style="left:330px;top:38.4px;width:6px;height:4px;border:.7px solid #bbb"></div><svg class="ab" style="left:0.30px;top:320.08px;opacity:0.85" width="11.8" height="6.4"><path d="M1.42 0.40V5.04M0.40 1.89H2.35M2.81 0.86H4.95M3.00 0.96V4.49H4.77V0.96M3.00 2.72H4.77M6.36 0.86H9.89V4.58H6.36ZM6.36 2.72H9.89" stroke="#111" stroke-width="0.9" fill="none"/></svg><div class="ab" style="left:284.3px;top:317.6px;width:54px;height:11px;background:#f6f6f6;border-left:.8px solid #d8d8d8"></div><svg class="ab" style="left:285.80px;top:320.52px;opacity:0.8" width="22.2" height="6.3"><path d="M0.63 0.95H4.73M2.68 0.40V4.96M1.08 2.68H4.27M0.40 4.59H4.96M6.06 0.40V4.96M6.06 1.08H7.52M6.06 2.91H7.52M8.21 0.63H10.03V4.73H8.21ZM8.21 2.68H10.03M13.28 0.40V1.31M11.23 1.40H15.33M11.91 2.31H14.65M11.91 3.23H14.65M13.28 1.40V4.96M11.46 4.73H15.10M16.30 1.40H20.86M17.67 0.40V4.96M19.58 0.40V4.96M16.30 3.68H20.86" stroke="#222" stroke-width="0.85" fill="none"/></svg><div class="ab" style="left:308px;top:317.6px;width:.8px;height:11px;background:#d8d8d8"></div><div class="t" style="left:309.6px;top:320px;font-size:6px;color:#345;letter-spacing:-.32px">T=500.000</div></div><svg class="ab" style="left:0;top:0" width="810" height="411"><rect x="445.2" y="126.1" width="320.09999999999997" height="260.0" fill="#000"/><path d="M477.50 126.1V386.1" stroke="#262626" stroke-width="1"/><path d="M509.50 126.1V386.1" stroke="#4a4a4a" stroke-width="1"/><path d="M541.50 126.1V386.1" stroke="#444444" stroke-width="1"/><path d="M573.50 126.1V386.1" stroke="#2a2a2a" stroke-width="1"/><path d="M605.50 126.1V386.1" stroke="#282828" stroke-width="1"/><path d="M637.50 126.1V386.1" stroke="#484848" stroke-width="1"/><path d="M669.50 126.1V386.1" stroke="#363636" stroke-width="1"/><path d="M701.50 126.1V386.1" stroke="#484848" stroke-width="1"/><path d="M733.50 126.1V386.1" stroke="#2a2a2a" stroke-width="1"/><path d="M765.50 126.1V386.1" stroke="#4a4a4a" stroke-width="1"/><path d="M445.2 360.50H765.3" stroke="#4a4a4a" stroke-width="1"/><path d="M445.2 318.50H765.3" stroke="#262626" stroke-width="1"/><path d="M445.2 277.50H765.3" stroke="#323232" stroke-width="1"/><path d="M445.2 235.50H765.3" stroke="#3a3a3a" stroke-width="1"/><path d="M445.2 194.50H765.3" stroke="#424242" stroke-width="1"/><path d="M445.2 152.50H765.3" stroke="#242424" stroke-width="1"/><path d="M445.2 126.1V386.1H765.3" stroke="#9a9a9a" stroke-width=".8" fill="none"/><path d="M637.26 235.70L765.30 152.50" stroke="#dc0a0a" stroke-width="1.35"/><path d="M445.2 360.50L637.26 235.70H765.3" stroke="#1a8ce6" stroke-width="1.3" fill="none"/><rect x="721.3" y="131.2" width="39.5" height="15.4" fill="#000" stroke="#8a8a8a" stroke-width=".6"/><path d="M724 138.2h4v-4.3h5" stroke="#ff1a1a" stroke-width="1.1" fill="none"/><path d="M724 145.2h4v-4.3h5" stroke="#1a9aff" stroke-width="1.1" fill="none"/></svg><div class="t" style="left:744px;top:133.3px;font-size:5.4px;color:#ddd">input</div><div class="t" style="left:744px;top:140.2px;font-size:5.4px;color:#ddd">output</div><div class="t" style="left:443.52px;top:388.9px;font-size:5.9px;color:#9a9a9a;letter-spacing:-.3px">0</div><div class="t" style="left:473.86px;top:388.9px;font-size:5.9px;color:#9a9a9a;letter-spacing:-.3px">50</div><div class="t" style="left:504.19px;top:388.9px;font-size:5.9px;color:#9a9a9a;letter-spacing:-.3px">100</div><div class="t" style="left:536.21px;top:388.9px;font-size:5.9px;color:#9a9a9a;letter-spacing:-.3px">150</div><div class="t" style="left:568.22px;top:388.9px;font-size:5.9px;color:#9a9a9a;letter-spacing:-.3px">200</div><div class="t" style="left:600.23px;top:388.9px;font-size:5.9px;color:#9a9a9a;letter-spacing:-.3px">250</div><div class="t" style="left:632.24px;top:388.9px;font-size:5.9px;color:#9a9a9a;letter-spacing:-.3px">300</div><div class="t" style="left:664.25px;top:388.9px;font-size:5.9px;color:#9a9a9a;letter-spacing:-.3px">350</div><div class="t" style="left:696.25px;top:388.9px;font-size:5.9px;color:#9a9a9a;letter-spacing:-.3px">400</div><div class="t" style="left:728.26px;top:388.9px;font-size:5.9px;color:#9a9a9a;letter-spacing:-.3px">450</div><div class="t" style="left:760.27px;top:388.9px;font-size:5.9px;color:#9a9a9a;letter-spacing:-.3px">500</div><div class="t" style="left:440.45px;top:357.50px;font-size:5.9px;color:#9a9a9a;letter-spacing:-.3px">0</div><div class="t" style="left:433.75px;top:315.90px;font-size:5.9px;color:#9a9a9a;letter-spacing:-.3px">100</div><div class="t" style="left:433.75px;top:274.30px;font-size:5.9px;color:#9a9a9a;letter-spacing:-.3px">200</div><div class="t" style="left:433.75px;top:232.70px;font-size:5.9px;color:#9a9a9a;letter-spacing:-.3px">300</div><div class="t" style="left:433.75px;top:191.10px;font-size:5.9px;color:#9a9a9a;letter-spacing:-.3px">400</div><div class="t" style="left:433.75px;top:149.50px;font-size:5.9px;color:#9a9a9a;letter-spacing:-.3px">500</div></body></html>
